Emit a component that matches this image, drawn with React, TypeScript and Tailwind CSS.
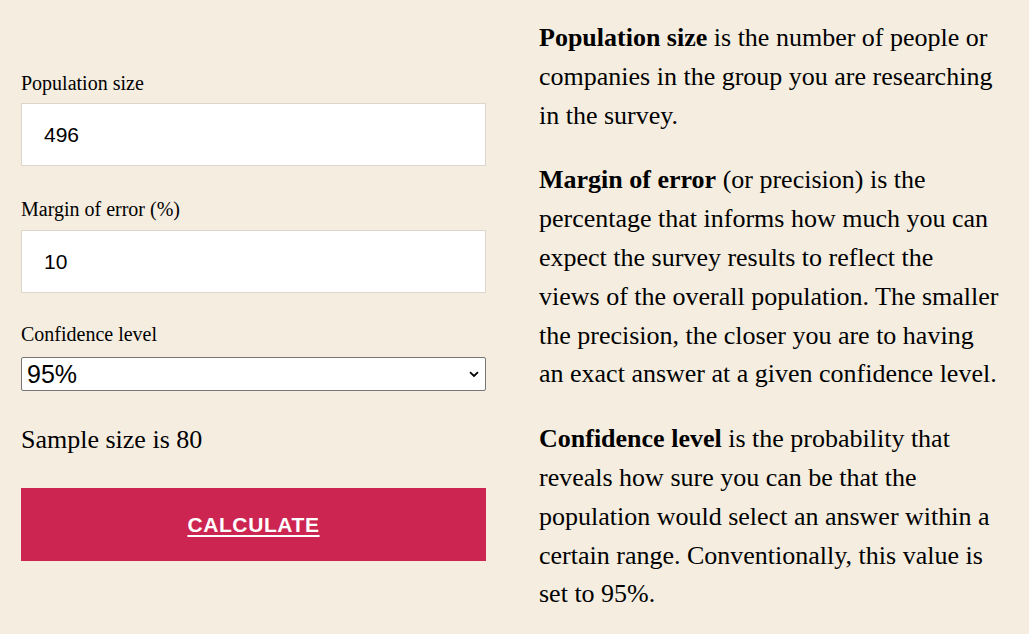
import React from "react";

export default function App() {
  const serif = "font-['Liberation_Serif','Times_New_Roman',serif]";
  return (
    <div className={`min-h-[634px] w-[1029px] bg-[#f5eee0] text-black ${serif} flex`}>
      <div className="ml-[21px] mt-[71px] w-[465px] flex flex-col">
        <label className="text-[20px] leading-[24px] block">Population size</label>
        <input
          defaultValue="496"
          className="mt-[8px] h-[63px] w-full bg-white border border-[#ddd6cb] px-[22px] text-[21px] font-['Liberation_Sans',Arial,sans-serif] outline-none"
        />
        <label className="mt-[31px] text-[20px] leading-[24px] block">Margin of error (%)</label>
        <input
          defaultValue="10"
          className="mt-[9px] h-[63px] w-full bg-white border border-[#ddd6cb] px-[22px] text-[21px] font-['Liberation_Sans',Arial,sans-serif] outline-none"
        />
        <label className="mt-[29px] text-[20px] leading-[24px] block">Confidence level</label>
        <div className="relative mt-[11px] h-[34px] w-full">
          <select
            defaultValue="95%"
            className="appearance-none h-[34px] w-full bg-white border border-[#767676] rounded-[2px] pl-[5px] text-[25px] leading-[32px] font-['Liberation_Sans',Arial,sans-serif] outline-none"
          >
            <option>90%</option>
            <option>95%</option>
            <option>99%</option>
          </select>
          <svg className="absolute right-[7px] top-[14px]" width="10" height="7" viewBox="0 0 10 7">
            <path d="M1 1.2 L5 5 L9 1.2" fill="none" stroke="#000" strokeWidth="1.8" />
          </svg>
        </div>
        <div className="mt-[34px] text-[26px] leading-[30px]">Sample size is 80</div>
        <button className="mt-[33px] h-[73px] w-full bg-[#cd2552] text-white font-['Liberation_Sans',Arial,sans-serif] font-bold text-[21px] tracking-[0.6px] underline underline-offset-[3px] decoration-2">
          CALCULATE
        </button>
      </div>
      <div className="ml-[53px] mt-[19px] w-[463px] text-[26px] leading-[38.8px]">
        <p>
          <b>Population size</b> is the number of people or companies in the group you are researching in the survey.
        </p>
        <p className="mt-[26px]">
          <b>Margin of error</b> (or precision) is the percentage that informs how much you can expect the survey results to reflect the
          <br />
          views of the overall population. The smaller the precision, the closer you are to having an exact answer at a given confidence level.
        </p>
        <p className="mt-[26px]">
          <b>Confidence level</b> is the probability that reveals how sure you can be that the population would select an answer within a certain range. Conventionally, this value is set to 95%.
        </p>
      </div>
    </div>
  );
}
